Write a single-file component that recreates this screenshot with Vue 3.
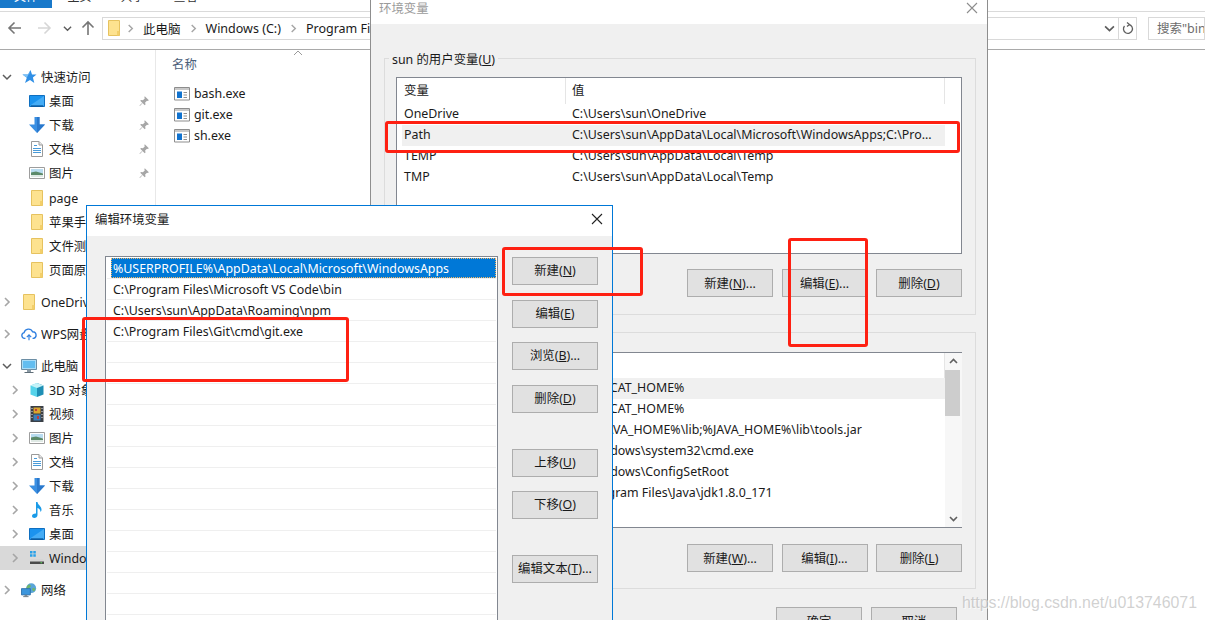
<script setup>
const tabs = ['主页', '共享', '查看']
const crumbs = ['此电脑', 'Windows (C:)', 'Program Files']

const quick = [
  { name: '快速访问', icon: 'star', open: true, level: 0 },
  { name: '桌面', icon: 'desk', pin: true, level: 1 },
  { name: '下载', icon: 'down', pin: true, level: 1 },
  { name: '文档', icon: 'doc', pin: true, level: 1 },
  { name: '图片', icon: 'pic', pin: true, level: 1 },
  { name: 'page', icon: 'folder', level: 1, gap: true },
  { name: '苹果手机', icon: 'folder', level: 1 },
  { name: '文件测试', icon: 'folder', level: 1 },
  { name: '页面原型', icon: 'folder', level: 1 }
]
const cloud = [{ name: 'OneDrive', icon: 'folder', arrow: true, level: 0 }]
const wps = [{ name: 'WPS网盘', icon: 'wps', arrow: true, level: 0 }]
const computer = [
  { name: '此电脑', icon: 'pc', open: true, level: 0 },
  { name: '3D 对象', icon: 'cube', arrow: true, level: 1 },
  { name: '视频', icon: 'film', arrow: true, level: 1 },
  { name: '图片', icon: 'pic', arrow: true, level: 1 },
  { name: '文档', icon: 'doc', arrow: true, level: 1 },
  { name: '下载', icon: 'down', arrow: true, level: 1 },
  { name: '音乐', icon: 'note', arrow: true, level: 1 },
  { name: '桌面', icon: 'desk', arrow: true, level: 1 },
  { name: 'Windows (C:)', icon: 'drive', arrow: true, level: 1, active: true }
]
const net = [{ name: '网络', icon: 'net', arrow: true, level: 0 }]
const navGroups = [quick, cloud, wps, computer, net]

const files = ['bash.exe', 'git.exe', 'sh.exe']

const userVars = [
  { name: 'OneDrive', value: 'C:\\Users\\sun\\OneDrive' },
  { name: 'Path', value: 'C:\\Users\\sun\\AppData\\Local\\Microsoft\\WindowsApps;C:\\Pro...', hot: true },
  { name: 'TEMP', value: 'C:\\Users\\sun\\AppData\\Local\\Temp' },
  { name: 'TMP', value: 'C:\\Users\\sun\\AppData\\Local\\Temp' }
]
const sysVars = [
  { name: 'CATALINA_BASE', value: '%TOMCAT_HOME%', hot: true },
  { name: 'CATALINA_HOME', value: '%TOMCAT_HOME%' },
  { name: 'CLASSPATH', value: '.;.;.;%JAVA_HOME%\\lib;%JAVA_HOME%\\lib\\tools.jar' },
  { name: 'ComSpec', value: 'C:\\Windows\\system32\\cmd.exe' },
  { name: 'ConfigSetRoot', value: 'C:\\Windows\\ConfigSetRoot' },
  { name: 'JAVA_HOME', value: 'C:\\Program Files\\Java\\jdk1.8.0_171' }
]

const paths = [
  '%USERPROFILE%\\AppData\\Local\\Microsoft\\WindowsApps',
  'C:\\Program Files\\Microsoft VS Code\\bin',
  'C:\\Users\\sun\\AppData\\Roaming\\npm',
  'C:\\Program Files\\Git\\cmd\\git.exe'
]
const pathRows = [...paths, ...Array(14).fill('')]

const userBtns = [['新建', 'N', '...'], ['编辑', 'E', '...'], ['删除', 'D', '']]
const sysBtns = [['新建', 'W', '...'], ['编辑', 'I', '...'], ['删除', 'L', '']]
const editBtns = [
  { label: '新建', key: 'N' },
  { label: '编辑', key: 'E' },
  { label: '浏览', key: 'B', dots: true },
  { label: '删除', key: 'D' },
  { label: '上移', key: 'U', apart: true },
  { label: '下移', key: 'O' },
  { label: '编辑文本', key: 'T', dots: true, apart: true }
]
</script>

<template>
  <div class="desktop">
    <svg class="sprite" width="0" height="0">
      <defs>
        <symbol id="folder" viewBox="0 0 16 16">
          <path d="M2.500.5h11v15h-11z" fill="#fde28f" stroke="#e6c25f" />
          <path d="M11 11h2.500v4.500H11z" fill="#f3cf6a" />
        </symbol>
        <symbol id="star" viewBox="0 0 16 16">
          <path d="M9.500 1l1.500 4.500h4.500l-3.600 3 1.400 5.500-4.300-3-5 3 1.800-5.200-4.300-3.300h5.500z" fill="#2f8fe6" />
          <path d="M9.500 1L8 5.500 1.500 5.500l4.300 3.300z" fill="#7cc1f5" />
        </symbol>
        <symbol id="desk" viewBox="0 0 16 16">
          <path d="M.5 2.500h15v11H.5z" fill="#1b93ee" stroke="#0f6fc0" />
          <path d="M1 12.500L15 3v9.500z" fill="#45acf5" />
          <path d="M2 12.500h12v1H2z" fill="#0a4a85" />
        </symbol>
        <symbol id="down" viewBox="0 0 16 16">
          <path d="M5.500 0h5v7.500H16L8 16 0 7.500h5.500z" fill="#3a8fe2" />
          <path d="M8 0h2.500v7.500H16L8 16z" fill="#2a78cc" />
        </symbol>
        <symbol id="doc" viewBox="0 0 16 16">
          <path d="M2.500.5H10L13.500 4v11.500h-11z" fill="#fff" stroke="#9a9a9a" />
          <path d="M10 .5V4h3.500" fill="#e8e8e8" stroke="#9a9a9a" />
          <path d="M5 4h3v1H5zM4 7h8v1H4zM4 9h8v1H4zM4 11h8v1H4z" fill="#4a9bd8" />
        </symbol>
        <symbol id="pic" viewBox="0 0 16 16">
          <path d="M.5 2.500h15v11H.5z" fill="#fff" stroke="#9d9d9d" />
          <path d="M2 4h12v4H2z" fill="#b9dcf0" />
          <path d="M2 7.500l5-1 7 2V12H2z" fill="#5c8a6a" />
          <path d="M2 10h12v2H2z" fill="#dfe9e4" />
        </symbol>
        <symbol id="pin" viewBox="0 0 16 16">
          <path d="M9 1.500l5.500 5.500-1.500 1-1-.5-2.500 2.500.5 2.500-1 1L3 7.500l1-1 2.500.5L9 4.500 8.500 3z" fill="#a6a6a6" />
          <path d="M5.500 10.500L2 14l.5.500 3.500-3.500z" fill="#a6a6a6" />
        </symbol>
        <symbol id="wps" viewBox="0 0 18 16">
          <path d="M5 13H4a3.300 3.300 0 0 1-.5-6.500A5 5 0 0 1 13 5.500a3.800 3.800 0 0 1 1 7.500h-1" fill="none" stroke="#2f7fe0" stroke-width="1.500" />
          <path d="M6.500 11.500L9 9l2.500 2.500M9 9v6" fill="none" stroke="#2f7fe0" stroke-width="1.300" />
        </symbol>
        <symbol id="pc" viewBox="0 0 16 16">
          <path d="M.5 1.500h15v10H.5z" fill="#a9dcf7" stroke="#6c8ea5" />
          <path d="M2 3h12v7H2z" fill="#62bdf0" />
          <path d="M6 11.500h4V14H6z" fill="#8b9aa5" />
          <path d="M3.500 14h9v1h-9z" fill="#5f6e78" />
        </symbol>
        <symbol id="cube" viewBox="0 0 16 16">
          <path d="M8 1l6.500 2.500v9L8 15z" fill="#1e8fb5" />
          <path d="M8 1L1.500 3.500v9L8 15z" fill="#55d3ea" />
          <path d="M8 1l6.500 2.500L8 6 1.500 3.500z" fill="#c5f2f8" />
        </symbol>
        <symbol id="film" viewBox="0 0 16 16">
          <path d="M1.500 0h13v16h-13z" fill="#3a3f46" />
          <path d="M4.500 1.500h7v6h-7z" fill="#d9a52e" />
          <path d="M4.500 8.500h7v6h-7z" fill="#3d7fb8" />
          <path d="M6 3h2v2H6zM8 10h2v3H8z" fill="#c23b3b" />
          <path d="M2.500 2h1v1h-1zM2.500 5h1v1h-1zM2.500 8h1v1h-1zM2.500 11h1v1h-1zM12.500 2h1v1h-1zM12.500 5h1v1h-1zM12.500 8h1v1h-1zM12.500 11h1v1h-1z" fill="#e6e6e6" />
        </symbol>
        <symbol id="note" viewBox="0 0 16 16">
          <path d="M7 0h1.500c.3 3 4 4 4 7.500 0 1-.3 2-1 2.500.2-2-1.500-3.500-3-4V13c0 1.800-1.600 3-3.200 3C4 16 3 15.200 3 14c0-1.500 1.700-2.700 4-2.500z" fill="#1a9be8" />
        </symbol>
        <symbol id="drive" viewBox="0 0 16 16">
          <path d="M1 1h2.500v2.500H1zM4.300 1h2.500v2.500H4.300zM1 4.300h2.500v2.500H1zM4.300 4.300h2.500v2.500H4.300z" fill="#27a0e8" />
          <path d="M2 9h12l1 2.500H1z" fill="#d5d5d5" />
          <path d="M1 11.500h14V14H1z" fill="#4a4a4a" />
          <path d="M11.500 12.300h1.500v1h-1.500z" fill="#58e05a" />
        </symbol>
        <symbol id="net" viewBox="0 0 18 16">
          <circle cx="11.500" cy="6" r="5.500" fill="#5aa5d8" />
          <path d="M8 2.500c2-1 3.500 0 3 1.500s-2.500 1-3 3-2 .5-2-1 1-2.500 2-3.500zM13 6c1.500-.5 3 0 3 1.500S14 10 13.500 9 12 6.500 13 6z" fill="#6fb56a" />
          <path d="M.5 6.500h10v7H.5z" fill="#3c96dd" stroke="#2a6ea8" />
          <path d="M4 13.500h3V15H4z" fill="#7d8b94" />
          <path d="M2.500 15h6v1h-6z" fill="#5f6e78" />
        </symbol>
        <symbol id="exe" viewBox="0 0 16 14">
          <path d="M.5.500h15v12.500H.5z" fill="#fff" stroke="#8d8d8d" />
          <path d="M1 1h14v2H1z" fill="#c9c9c9" />
          <path d="M3 4.500h5V11H3z" fill="#1173cf" />
          <path d="M9.500 5H13v1H9.500zM9.500 7.500H13v1H9.500zM9.500 10H13v1H9.500z" fill="#8f8f8f" />
        </symbol>
        <symbol id="chev-r" viewBox="0 0 10 10">
          <path d="M3 1l4 4-4 4" fill="none" stroke="#a6a6a6" stroke-width="1.600" />
        </symbol>
        <symbol id="chev-d" viewBox="0 0 10 10">
          <path d="M1 3l4 4 4-4" fill="none" stroke="#5c5c5c" stroke-width="1.500" />
        </symbol>
      </defs>
    </svg>

    <div class="explorer">
      <div class="ribbon">
        <span class="tab tab-file">文件</span>
        <span v-for="t in tabs" :key="t" class="tab">{{ t }}</span>
      </div>

      <div class="addressrow">
        <svg class="nav-icon" width="16" height="16" viewBox="0 0 16 16"><path d="M14 8H2M7.500 2.500L2 8l5.500 5.500" fill="none" stroke="#767676" stroke-width="1.600" /></svg>
        <svg class="nav-icon fwd" width="16" height="16" viewBox="0 0 16 16"><path d="M2 8h12M8.500 2.500L14 8l-5.500 5.500" fill="none" stroke="#d6d6d6" stroke-width="1.600" /></svg>
        <svg class="nav-icon drop" width="9" height="9"><use href="#chev-d" /></svg>
        <svg class="nav-icon up" width="16" height="16" viewBox="0 0 16 16"><path d="M8 15V2M2.500 7.500L8 2l5.500 5.500" fill="none" stroke="#767676" stroke-width="1.600" /></svg>
        <div class="address">
          <svg class="addr-folder" width="16" height="16"><use href="#folder" /></svg>
          <template v-for="c in crumbs" :key="c">
            <svg class="crumb-sep" width="9" height="9"><use href="#chev-r" /></svg>
            <span class="crumb">{{ c }}</span>
          </template>
          <svg class="addr-drop" width="11" height="11"><use href="#chev-d" /></svg>
          <span class="addr-refresh">
            <svg width="14" height="14" viewBox="0 0 14 14"><path d="M6 1.500l2.500 2L6 5.500M8 3.500A4.500 4.500 0 1 1 3.500 5" fill="none" stroke="#5f5f5f" stroke-width="1.300" /></svg>
          </span>
        </div>
        <div class="search">搜索"bin"</div>
      </div>

      <div class="panes">
        <div class="sidebar">
          <div v-for="(group, gi) in navGroups" :key="gi" class="navgroup">
            <div
              v-for="item in group"
              :key="item.name"
              class="navrow"
              :class="{ 'lvl-1': item.level === 1, active: item.active, gap: item.gap }"
            >
              <span class="navarrow">
                <svg v-if="item.open" width="10" height="10"><use href="#chev-d" /></svg>
                <svg v-else-if="item.arrow" width="10" height="10"><use href="#chev-r" /></svg>
              </span>
              <svg class="navicon" width="16" height="16"><use :href="'#' + item.icon" /></svg>
              <span class="navname">{{ item.name }}</span>
              <svg v-if="item.pin" class="pin" width="12" height="12"><use href="#pin" /></svg>
            </div>
          </div>
        </div>

        <div class="filelist">
          <svg class="sortcaret" width="10" height="6" viewBox="0 0 10 6"><path d="M1 5l4-4 4 4" fill="none" stroke="#9a9a9a" /></svg>
          <div class="colhead">名称</div>
          <div v-for="f in files" :key="f" class="file">
            <svg width="16" height="14"><use href="#exe" /></svg>
            <span>{{ f }}</span>
          </div>
        </div>
      </div>
    </div>

    <!-- 环境变量 -->
    <div class="win env">
      <div class="titlebar env-title">
        <span>环境变量</span>
        <svg width="12" height="12" viewBox="0 0 12 12"><path d="M1 1l10 10M11 1L1 11" stroke="#8d8d8d" stroke-width="1.100" /></svg>
      </div>
      <div class="env-body">
        <div class="group">
          <span class="legend">sun 的用户变量(<u>U</u>)</span>
          <div class="varlist">
            <div class="varcols">
              <div class="varhead"><span class="h1">变量</span><span class="h2">值</span></div>
              <div v-for="v in userVars" :key="v.name" class="varrow" :class="{ hot: v.hot }">
                <span>{{ v.name }}</span><span>{{ v.value }}</span>
              </div>
            </div>
          </div>
          <div class="btnrow">
            <button v-for="b in userBtns" :key="b[1]" class="btn">{{ b[0] }}(<u>{{ b[1] }}</u>){{ b[2] }}</button>
          </div>
        </div>

        <div class="group group-sys">
          <span class="legend">系统变量(<u>S</u>)</span>
          <div class="varlist">
            <div class="varcols">
              <div class="varhead short"><span class="h1">变量</span><span class="h2">值</span></div>
              <div v-for="v in sysVars" :key="v.name" class="varrow" :class="{ hot: v.hot }">
                <span>{{ v.name }}</span><span>{{ v.value }}</span>
              </div>
            </div>
            <div class="scrollbar">
              <svg width="17" height="17" viewBox="0 0 17 17"><path d="M5 10l3.500-3.500L12 10" fill="none" stroke="#606060" stroke-width="1.600" /></svg>
              <div class="thumb"></div>
              <div class="spacer"></div>
              <svg width="17" height="17" viewBox="0 0 17 17"><path d="M5 7l3.500 3.500L12 7" fill="none" stroke="#606060" stroke-width="1.600" /></svg>
            </div>
          </div>
          <div class="btnrow">
            <button v-for="b in sysBtns" :key="b[1]" class="btn">{{ b[0] }}(<u>{{ b[1] }}</u>){{ b[2] }}</button>
          </div>
        </div>

        <div class="footer">
          <button class="btn">确定</button>
          <button class="btn">取消</button>
        </div>
      </div>
    </div>

    <!-- 编辑环境变量 -->
    <div class="win edit">
      <div class="titlebar edit-title">
        <span>编辑环境变量</span>
        <svg width="12" height="12" viewBox="0 0 12 12"><path d="M1 1l10 10M11 1L1 11" stroke="#222" stroke-width="1.100" /></svg>
      </div>
      <div class="edit-body">
        <div class="pathlist">
          <div v-for="(p, i) in pathRows" :key="i" class="pathrow">
            <span class="pathtext" :class="{ selected: i === 0 }">{{ p }}</span>
          </div>
        </div>
        <div class="btncol">
          <button v-for="b in editBtns" :key="b.label + b.key" class="btn" :class="{ apart: b.apart }">
            {{ b.label }}(<u>{{ b.key }}</u>){{ b.dots ? '...' : '' }}
          </button>
        </div>
      </div>
    </div>

    <!-- annotations -->
    <div class="mark mark-path"></div>
    <div class="mark mark-edit"></div>
    <div class="mark mark-new"></div>
    <div class="mark mark-git"></div>

    <div class="watermark">https://blog.csdn.net/u013746071</div>
  </div>
</template>

<style scoped>
.desktop {
  position: relative;
  width: 1205px;
  height: 620px;
  overflow: hidden;
  background: #fff;
  color: #1a1a1a;
  font-family: "Noto Sans", "Noto Sans CJK SC", sans-serif;
  font-size: 12.4px;
}

.sprite {
  position: absolute;
}

/* explorer */
.ribbon {
  display: flex;
  height: 11px;
  border-bottom: 1px solid #dadada;
  overflow: hidden;
}

.tab {
  width: 53px;
  height: 16px;
  margin-top: -8px;
  line-height: 10px;
  text-align: center;
  color: #333;
  font-size: 12px;
}

.tab-file {
  width: 52px;
  background: #1979ca;
  color: #fff;
}

.tab:nth-child(2) { margin-left: 1px; }

.addressrow {
  display: flex;
  align-items: center;
  height: 32px;
  padding-bottom: 5px;
  border-bottom: 1px solid #a9a9a9;
}

.nav-icon {
  flex: none;
  margin-left: 7px;
}

.fwd { margin-left: 13px; }
.drop { margin-left: 11px; }
.up { margin-left: 8px; }

.address {
  display: flex;
  align-items: center;
  flex: none;
  box-sizing: border-box;
  width: 1035px;
  height: 23px;
  margin-left: 6px;
  border: 1px solid #d9d9d9;
  padding-left: 3px;
  font-size: 12.5px;
}

.addr-folder {
  flex: none;
  margin-right: -4px;
}

.crumb-sep {
  flex: none;
  margin: 0 8px 0 8px;
}

.crumb { white-space: nowrap; }

.addr-drop {
  margin-left: auto;
}

.addr-refresh {
  display: flex;
  align-items: center;
  justify-content: center;
  width: 17px;
  height: 100%;
  margin-left: 3px;
  border-left: 1px solid #d9d9d9;
}

.search {
  box-sizing: border-box;
  height: 23px;
  margin-left: 11px;
  padding-left: 8px;
  flex: 1;
  border: 1px solid #d9d9d9;
  line-height: 21px;
  color: #6d6d6d;
  font-size: 12.5px;
  white-space: nowrap;
  overflow: hidden;
}

.panes {
  display: flex;
  height: 570px;
}

.sidebar {
  box-sizing: border-box;
  width: 156px;
  padding-top: 15px;
  border-right: 1px solid #e8e8e8;
}

.navgroup {
  margin-bottom: 8px;
}

.navrow {
  display: flex;
  align-items: center;
  height: 24px;
  padding-right: 5px;
}

.navrow.gap { margin-top: 1px; }
.navrow.lvl-1 { padding-left: 8px; }
.navrow.active { background: #d9d9d9; }

.navarrow {
  display: flex;
  align-items: center;
  justify-content: center;
  flex: none;
  width: 14px;
  margin-right: 7px;
}

.navicon {
  flex: none;
  margin-right: 4px;
}

.navname {
  white-space: nowrap;
  overflow: hidden;
}

.pin {
  flex: none;
  margin-left: auto;
}

.filelist {
  position: relative;
  padding-left: 16px;
}

.sortcaret {
  position: absolute;
  left: 137px;
  top: 0;
}

.colhead {
  height: 33px;
  padding-top: 6px;
  box-sizing: border-box;
  line-height: 18px;
  color: #4c607a;
}

.file {
  display: flex;
  align-items: center;
  gap: 4px;
  height: 21px;
  margin-left: 2px;
}

/* windows */
.win {
  position: absolute;
  box-sizing: border-box;
  background: #f0f0f0;
}

.titlebar {
  display: flex;
  align-items: center;
  justify-content: space-between;
  background: #fff;
}

.env {
  left: 370px;
  top: -16px;
  width: 618px;
  height: 680px;
  border: 1px solid #8e8e8e;
}

.env-title {
  height: 39px;
  padding: 7px 9px 0 8px;
  box-sizing: border-box;
  color: #9b9b9b;
}

.env-body {
  padding: 34px 0 0 13px;
}

.group {
  position: relative;
  box-sizing: border-box;
  width: 592px;
  height: 257px;
  padding: 18px 13px 0 11px;
  border: 1px solid #dcdcdc;
}

.group-sys {
  margin-top: 17px;
  padding-top: 19px;
}

.legend {
  position: absolute;
  left: 4px;
  top: -8px;
  padding: 0 3px;
  line-height: 18px;
  background: #f0f0f0;
  white-space: nowrap;
}

.varlist {
  display: flex;
  box-sizing: border-box;
  height: 177px;
  border: 1px solid #828790;
  background: #fff;
}

.group-sys .varlist { height: 176px; }

.varcols {
  width: 548px;
  flex: none;
}

.varhead {
  display: flex;
  height: 26px;
  line-height: 26px;
}

.varhead.short { height: 25px; }

.h1 {
  box-sizing: border-box;
  width: 169px;
  padding-left: 7px;
  border-right: 1px solid #e5e5e5;
}

.h2 {
  flex: 1;
  padding-left: 6px;
  border-right: 1px solid #e5e5e5;
}

.varrow {
  display: grid;
  grid-template-columns: 168px 1fr;
  height: 21px;
  margin-left: 5px;
  padding-left: 2px;
  line-height: 20px;
  white-space: nowrap;
  overflow: hidden;
}

.varrow.hot { background: #f0f0f0; }

.scrollbar {
  display: flex;
  flex-direction: column;
  flex: 1;
  background: #f7f7f7;
}

.thumb {
  width: 15px;
  height: 46px;
  background: #cdcdcd;
}

.spacer { flex: 1; }

.btnrow {
  display: flex;
  justify-content: flex-end;
  gap: 8.5px;
  margin-top: 15px;
}

.group-sys .btnrow { margin-top: 16px; }

.btn {
  box-sizing: border-box;
  width: 86px;
  height: 28px;
  padding: 0;
  border: 1px solid #adadad;
  background: #e1e1e1;
  color: #1a1a1a;
  font: inherit;
  white-space: nowrap;
}

.footer {
  display: flex;
  justify-content: flex-end;
  gap: 9px;
  width: 573px;
  margin-top: 18px;
}

.edit {
  left: 86px;
  top: 205px;
  width: 527px;
  height: 440px;
  border: 1px solid #0078d7;
}

.edit-title {
  height: 30px;
  padding: 0 9px 4px 8px;
  box-sizing: border-box;
  color: #1a1a1a;
}

.edit-body {
  display: flex;
  padding: 20px 0 0 18px;
}

.pathlist {
  box-sizing: border-box;
  width: 393px;
  height: 400px;
  padding: 1px 1px 0;
  border: 1px solid #828790;
  background: #fff;
}

.pathrow {
  height: 20px;
  border-bottom: 1px solid #efefef;
}

.pathtext {
  display: block;
  box-sizing: border-box;
  height: 20px;
  margin-left: 4px;
  padding-left: 2px;
  line-height: 22px;
  white-space: nowrap;
  overflow: hidden;
}

.pathtext.selected {
  background: #0078d7;
  color: #fff;
  outline: 1px dotted #f2b766;
  outline-offset: -1px;
}

.btncol {
  display: flex;
  flex-direction: column;
  gap: 14.67px;
  margin: 1px 0 0 14px;
}

.btncol .btn { padding-bottom: 2px; }

.btn.apart { margin-top: 21px; }

/* annotations */
.mark {
  position: absolute;
  box-sizing: border-box;
  border: 3px solid #fe2012;
  border-radius: 3px;
}

.mark-path { left: 385px; top: 121px; width: 575px; height: 32px; }
.mark-edit { left: 788px; top: 238px; width: 80px; height: 109px; }
.mark-new { left: 502px; top: 247px; width: 141px; height: 49px; }
.mark-git { left: 82px; top: 317px; width: 267px; height: 65px; }

.watermark {
  position: absolute;
  right: 8px;
  top: 593px;
  font-family: "Liberation Sans", sans-serif;
  font-size: 15.9px;
  line-height: 20px;
  color: rgba(170, 170, 170, 0.55);
  text-shadow: 1px 1px 0 rgba(255, 255, 255, 0.6);
}
</style>
